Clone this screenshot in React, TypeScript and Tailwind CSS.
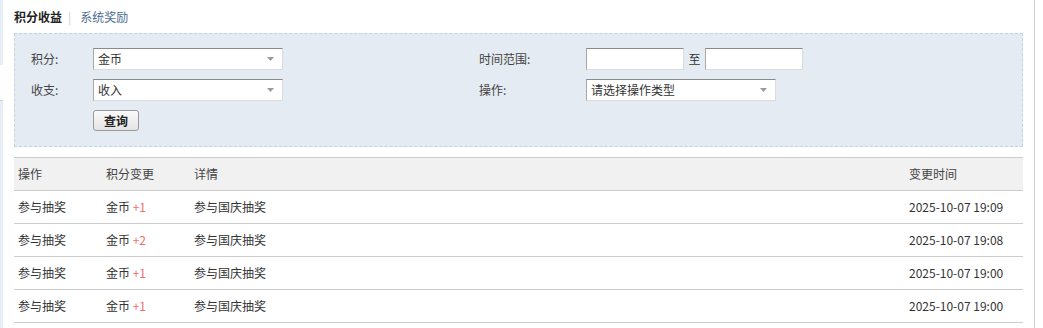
import React from "react";

const font = { fontFamily: '"Noto Sans CJK SC", "Noto Sans", sans-serif' };

function Select({ value, width }: { value: string; width: string }) {
  return (
    <div
      className={`${width} h-[22px] bg-white border border-t-[#8a8a8a] border-l-[#a8a8a8] border-r-[#dcdcdc] border-b-[#dcdcdc] flex items-center justify-between pl-[4px] pr-[8px]`}
    >
      <span className="text-[12px] leading-[20px] text-[#333]">{value}</span>
      <svg width="7" height="4" viewBox="0 0 7 4">
        <polygon points="0,0 7,0 3.5,4" fill="#9a9a9a" />
      </svg>
    </div>
  );
}

function Input({ width }: { width: string }) {
  return (
    <div
      className={`${width} h-[22px] bg-white border border-t-[#8a8a8a] border-l-[#a8a8a8] border-r-[#dcdcdc] border-b-[#dcdcdc]`}
    />
  );
}

const rows = [
  { op: "参与抽奖", amt: "+1", detail: "参与国庆抽奖", time: "2025-10-07 19:09" },
  { op: "参与抽奖", amt: "+2", detail: "参与国庆抽奖", time: "2025-10-07 19:08" },
  { op: "参与抽奖", amt: "+1", detail: "参与国庆抽奖", time: "2025-10-07 19:00" },
  { op: "参与抽奖", amt: "+1", detail: "参与国庆抽奖", time: "2025-10-07 19:00" },
];

export default function App() {
  return (
    <div className="w-[1043px] h-[328px] bg-white overflow-hidden flex text-[12px] text-[#333]" style={font}>
      {/* left sidebar edge */}
      <div className="w-[3px] flex flex-col shrink-0">
        <div className="h-[65px] bg-[#e6eef7]" />
        <div className="h-[35px] bg-white" />
        <div className="h-[1px] bg-[#cfcfcf]" />
        <div className="flex-1 bg-[#e6eef7]" />
      </div>

      {/* main */}
      <div className="w-[1020px] pl-[11px] shrink-0">
        {/* tabs */}
        <div className="h-[33px] flex items-center">
          <span className="font-bold text-[#222] leading-[16px]">积分收益</span>
          <span className="text-[#c8c8c8] mx-[6px] leading-[16px]">|</span>
          <span className="text-[#4d6e8f] leading-[16px] ml-[3px]">系统奖励</span>
        </div>

        {/* filter box */}
        <div className="w-[1009px] h-[114px] bg-[#e4ebf2] border border-dashed border-[#c3d3e2] pt-[14px] pl-[16px]">
          <div className="flex">
            <div className="w-[448px] flex flex-col gap-[9px]">
              <div className="flex items-center">
                <span className="w-[62px] text-[#444]">积分:</span>
                <Select value="金币" width="w-[190px]" />
              </div>
              <div className="flex items-center">
                <span className="w-[62px] text-[#444]">收支:</span>
                <Select value="收入" width="w-[190px]" />
              </div>
              <div className="flex">
                <div className="w-[62px]" />
                <button className="w-[46px] h-[21px] rounded-[3px] border border-[#9a9a9a] bg-gradient-to-b from-[#fafafa] to-[#e4e4e4] text-[12px] leading-[19px] font-semibold text-[#222]">
                  查询
                </button>
              </div>
            </div>
            <div className="flex flex-col gap-[9px]">
              <div className="flex items-center">
                <span className="w-[107px] text-[#444]">时间范围:</span>
                <Input width="w-[98px]" />
                <span className="w-[21px] text-center text-[#333]">至</span>
                <Input width="w-[98px]" />
              </div>
              <div className="flex items-center">
                <span className="w-[107px] text-[#444]">操作:</span>
                <Select value="请选择操作类型" width="w-[190px]" />
              </div>
            </div>
          </div>
        </div>

        {/* table */}
        <div className="w-[1009px] mt-[10px]">
          <div className="flex h-[34px] items-center bg-[#f1f1f1] border-t border-b border-[#cccccc] text-[#444]">
            <div className="w-[92px] pl-[4px]">操作</div>
            <div className="w-[88px]">积分变更</div>
            <div className="w-[715px]">详情</div>
            <div className="flex-1">变更时间</div>
          </div>
          {rows.map((r, i) => (
            <div key={i} className="flex h-[33px] items-center border-b border-[#cccccc] text-[#333]">
              <div className="w-[92px] pl-[4px]">{r.op}</div>
              <div className="w-[88px]">
                金币 <span className="text-[#f26d6d]">{r.amt}</span>
              </div>
              <div className="w-[715px]">{r.detail}</div>
              <div className="flex-1">{r.time}</div>
            </div>
          ))}
        </div>
      </div>

      {/* right vertical rule */}
      <div className="w-[11px] shrink-0" />
      <div className="w-[1px] h-full bg-[#cfcfcf] shrink-0" />
    </div>
  );
}
